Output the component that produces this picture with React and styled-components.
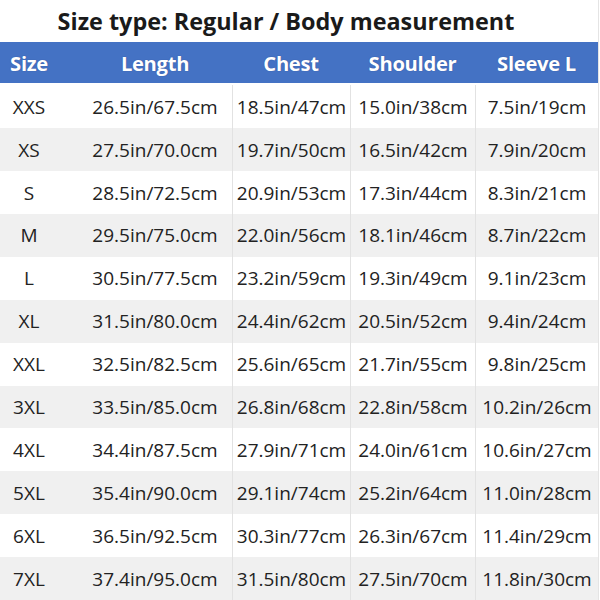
import React from 'react';
import styled, { createGlobalStyle } from 'styled-components';

const GlobalStyle = createGlobalStyle`
    html, body {
        margin: 0;
        padding: 0;
        background: #fff;
    }
    body {
        font-family: 'Open Sans', 'Noto Sans', sans-serif;
    }
`;

const Page = styled.div`
    width: 598px;
    height: 600px;
    overflow: hidden;
    display: flex;
    flex-direction: column;
    border-right: 1px solid #e4e4e4;
`;

const Title = styled.h1`
    margin: 0;
    height: 43px;
    display: flex;
    align-items: center;
    justify-content: center;
    padding-right: 26px;
    font-size: 23.4px;
    font-weight: 700;
    color: #1a1a1a;
`;

const Grid = styled.div`
    display: grid;
    grid-template-columns: 58px 174px 118px 125px 123px;
    grid-auto-rows: 42.9px;
`;

const HeadCell = styled.div`
    background: #4472c4;
    height: 41px;
    display: flex;
    align-items: center;
    justify-content: center;
    padding-left: ${(p) => p.$shift || 0}px;
    color: #fff;
    font-size: 20.2px;
    font-weight: 700;
    letter-spacing: -0.3px;
    text-shadow: 0 0 1px rgba(30, 50, 110, 0.6);
`;

const Cell = styled.div`
    display: flex;
    align-items: center;
    justify-content: center;
    padding-left: ${(p) => p.$shift || 0}px;
    background: ${(p) => (p.$odd ? '#f0f0f0' : '#fff')};
    border-left: ${(p) => (p.$line ? '1px solid #e2e2e2' : 'none')};
    color: #222;
    font-size: 19px;
    white-space: nowrap;
`;

const headers = [
    { label: 'Size', shift: 0 },
    { label: 'Length', shift: 20 },
    { label: 'Chest', shift: 0 },
    { label: 'Shoulder', shift: 0 },
    { label: 'Sleeve L', shift: 0 },
];

const rows = [
    ['XXS', '26.5in/67.5cm', '18.5in/47cm', '15.0in/38cm', '7.5in/19cm'],
    ['XS', '27.5in/70.0cm', '19.7in/50cm', '16.5in/42cm', '7.9in/20cm'],
    ['S', '28.5in/72.5cm', '20.9in/53cm', '17.3in/44cm', '8.3in/21cm'],
    ['M', '29.5in/75.0cm', '22.0in/56cm', '18.1in/46cm', '8.7in/22cm'],
    ['L', '30.5in/77.5cm', '23.2in/59cm', '19.3in/49cm', '9.1in/23cm'],
    ['XL', '31.5in/80.0cm', '24.4in/62cm', '20.5in/52cm', '9.4in/24cm'],
    ['XXL', '32.5in/82.5cm', '25.6in/65cm', '21.7in/55cm', '9.8in/25cm'],
    ['3XL', '33.5in/85.0cm', '26.8in/68cm', '22.8in/58cm', '10.2in/26cm'],
    ['4XL', '34.4in/87.5cm', '27.9in/71cm', '24.0in/61cm', '10.6in/27cm'],
    ['5XL', '35.4in/90.0cm', '29.1in/74cm', '25.2in/64cm', '11.0in/28cm'],
    ['6XL', '36.5in/92.5cm', '30.3in/77cm', '26.3in/67cm', '11.4in/29cm'],
    ['7XL', '37.4in/95.0cm', '31.5in/80cm', '27.5in/70cm', '11.8in/30cm'],
];

export default function App() {
    return (
        <React.Fragment>
            <GlobalStyle />
            <Page>
                <Title>Size type: Regular / Body measurement</Title>
                <Grid>
                    {headers.map((h) => (
                        <HeadCell key={h.label} $shift={h.shift}>
                            {h.label}
                        </HeadCell>
                    ))}
                    {rows.map((row, r) =>
                        row.map((value, c) => (
                            <Cell
                                key={r + '-' + c}
                                $odd={r % 2 === 1}
                                $line={c >= 2}
                                $shift={c === 1 ? 20 : 0}
                            >
                                {value}
                            </Cell>
                        ))
                    )}
                </Grid>
            </Page>
        </React.Fragment>
    );
}
